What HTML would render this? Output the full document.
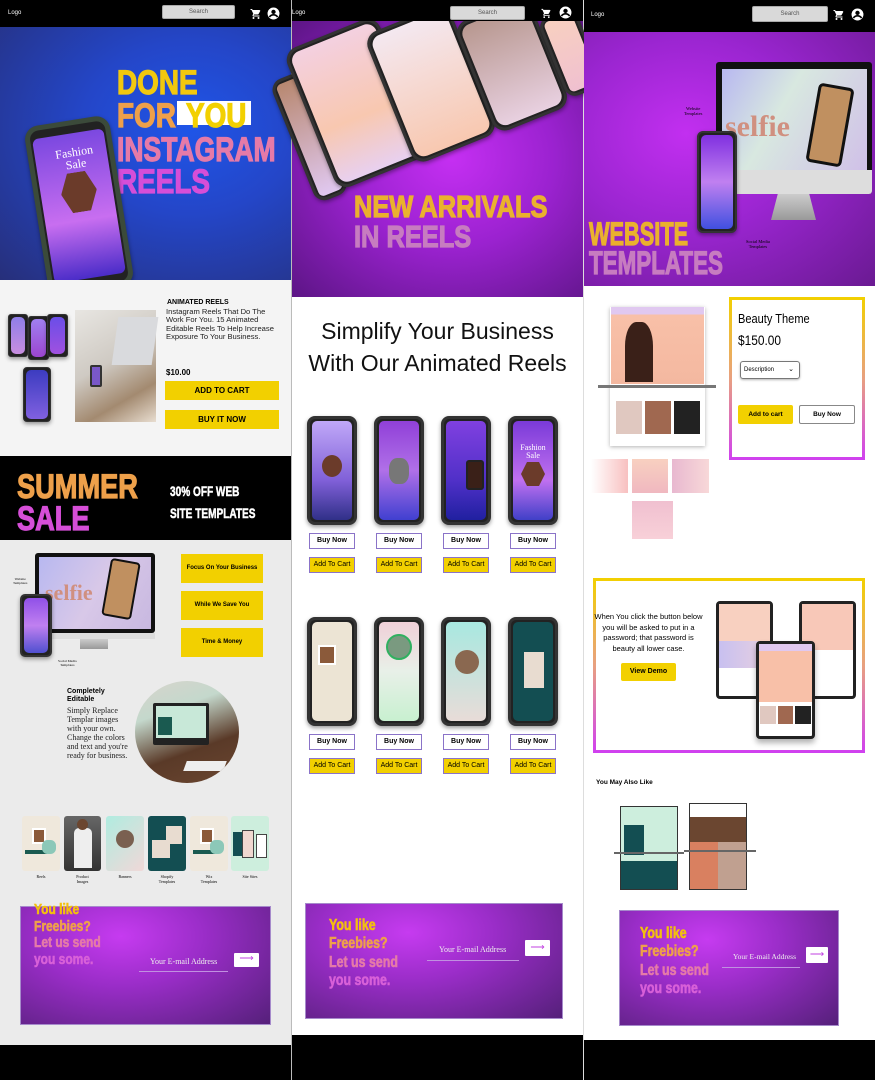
<!DOCTYPE html>
<html><head><meta charset="utf-8"><style>
*{margin:0;padding:0;box-sizing:border-box}
body{width:875px;height:1080px;position:relative;overflow:hidden;background:#fff;font-family:"Liberation Sans",sans-serif}
.a{position:absolute}
.hd{background:#000}
.logo{color:#fff;font-size:6px}
.srch{background:#d9d9d9;border:1px solid #aaa;border-radius:2px;color:#555;font-size:6px;text-align:center}
.big{font-family:"Liberation Sans",sans-serif;font-weight:900;line-height:1;transform-origin:left top;white-space:nowrap;-webkit-text-stroke:1.2px currentColor}
.sx{transform-origin:left top;white-space:nowrap}
.ph{border:3px solid #333;border-radius:8px;background:#222;box-shadow:0 2px 4px rgba(0,0,0,.4);overflow:hidden}
.ph i{position:absolute;left:2px;right:2px;top:2px;bottom:2px;border-radius:5px}
.yb{background:#f2d000;font-weight:900;color:#000;text-align:center}
.bn{border:1px solid #8a73c8;background:#fff;font-size:7px;font-weight:900;text-align:center;line-height:14px;width:46px;height:16px}
.ac{border:1px solid #8a73c8;background:#f2d000;font-size:7px;text-align:center;line-height:14px;width:46px;height:16px}
.fr{background:radial-gradient(ellipse at 40% 25%,#c63bf0 0%,#9a2dc8 40%,#55207a 100%);border:1px solid #a68acb}
.frt{font-weight:900;font-family:"Liberation Sans",sans-serif;transform:scaleX(.8);transform-origin:left top;white-space:nowrap;-webkit-text-stroke:.6px currentColor}
.frt span{-webkit-text-stroke:.6px}
.em{color:#eee;font-family:"Liberation Serif",serif;font-size:8px}
.arr{background:#fff;color:#c040e0;text-align:center;font-size:10px;line-height:12px;border-radius:1px}
</style></head><body>

<div class="a" style="left:291px;top:0;width:1px;height:1080px;background:#bbb"></div>
<div class="a" style="left:583px;top:0;width:1px;height:1080px;background:#ddd"></div>

<!-- ============ COL 1 ============ -->
<div class="a hd" style="left:0;top:0;width:291px;height:27px"></div>
<div class="a logo" style="left:8px;top:10px">Logo</div>
<div class="a srch" style="left:162px;top:5px;width:73px;height:14px;line-height:12px">Search</div>
<svg class="a" style="left:250px;top:8px" width="12" height="12" viewBox="0 0 24 24"><path fill="#fff" d="M7 18a2 2 0 1 0 0 4 2 2 0 0 0 0-4zM1 2v2h2l3.6 7.6-1.4 2.4c-.1.3-.2.6-.2 1 0 1.1.9 2 2 2h12v-2H7.4c-.1 0-.2-.1-.2-.2v-.1l.9-1.7h7.4c.8 0 1.4-.4 1.7-1l3.6-6.5L19.1 4H5.2l-.9-2H1zm16 16a2 2 0 1 0 0 4 2 2 0 0 0 0-4z"/></svg>
<svg class="a" style="left:267px;top:7px" width="13" height="13" viewBox="0 0 24 24"><circle cx="12" cy="12" r="11" fill="#fff"/><circle cx="12" cy="9" r="4" fill="#000"/><path d="M4.5 18.5c2-3 4.5-4 7.5-4s5.5 1 7.5 4" stroke="#000" stroke-width="3" fill="none"/></svg>

<div class="a" style="left:0;top:27px;width:291px;height:253px;background:radial-gradient(ellipse at 65% 40%,#1f55e8 0%,#2446c8 40%,#262f7a 100%)"></div>
<div class="a big" style="left:117px;top:66px;font-size:34px;color:#f2c80e;transform:scaleX(.82)">DONE</div>
<div class="a big" style="left:117px;top:99px;font-size:34px;color:#eea04a;transform:scaleX(.82)">FOR</div>
<div class="a" style="left:177px;top:101px;width:74px;height:24px;background:#fff"></div>
<div class="a big" style="left:186px;top:99px;font-size:34px;color:#f2d000;transform:scaleX(.82)">YOU</div>
<div class="a big" style="left:117px;top:133px;font-size:34px;color:#e57aa8;transform:scaleX(.78)">INSTAGRAM</div>
<div class="a big" style="left:117px;top:165px;font-size:34px;color:#d64ed8;transform:scaleX(.82)">REELS</div>
<div class="a ph" style="left:36px;top:120px;width:86px;height:172px;transform:rotate(-9deg);border-color:#3b4a3a;border-width:5px;border-radius:14px"><i style="background:linear-gradient(180deg,#7b48e0,#c86ef0 60%,#4a2cc8);border-radius:6px;top:8px;bottom:8px"></i></div>
<div class="a" style="left:56px;top:146px;color:#fff;font-family:'Liberation Serif',serif;font-size:12px;transform:rotate(-9deg);text-align:center;line-height:1">Fashion<br>Sale</div>
<div class="a" style="left:61px;top:172px;width:36px;height:40px;background:#6b3b2a;clip-path:polygon(25% 0,75% 0,100% 50%,75% 100%,25% 100%,0 50%);transform:rotate(-9deg)"></div>

<div class="a" style="left:0;top:280px;width:291px;height:176px;background:#f4f4f4"></div>
<div class="a" style="left:167px;top:299px;font-size:7px;font-weight:900">ANIMATED REELS</div>
<div class="a" style="left:166px;top:308px;width:118px;font-size:7.6px;line-height:8.4px;color:#222">Instagram Reels That Do The Work For You. 15 Animated Editable Reels To Help Increase Exposure To Your Business.</div>
<div class="a" style="left:166px;top:368px;font-size:8px;font-weight:bold">$10.00</div>
<div class="a yb" style="left:165px;top:381px;width:114px;height:19px;line-height:19px;font-size:8px">ADD TO CART</div>
<div class="a yb" style="left:165px;top:410px;width:114px;height:19px;line-height:19px;font-size:8px">BUY IT NOW</div>
<div class="a ph" style="left:8px;top:314px;width:20px;height:43px;border-width:1px;border-radius:3px"><i style="background:linear-gradient(#8f7ee8,#c88ee0)"></i></div>
<div class="a ph" style="left:28px;top:316px;width:21px;height:44px;border-width:1px;border-radius:3px"><i style="background:linear-gradient(#a080f0,#9b45d0)"></i></div>
<div class="a ph" style="left:47px;top:314px;width:21px;height:43px;border-width:1px;border-radius:3px"><i style="background:linear-gradient(#6a4ee8,#a050e0)"></i></div>
<div class="a ph" style="left:23px;top:367px;width:28px;height:55px;border-width:1px;border-radius:4px"><i style="background:linear-gradient(#3c3cc0,#8060e0)"></i></div>
<div class="a" style="left:75px;top:310px;width:81px;height:112px;background:linear-gradient(150deg,#e8e6e2 0%,#cfcac3 45%,#a38a70 75%,#e8ddd0 100%)"></div>
<div class="a" style="left:115px;top:317px;width:40px;height:48px;background:#d9dadd;transform:skewX(-8deg)"></div>
<div class="a" style="left:90px;top:365px;width:12px;height:22px;background:#7a58c8;border:2px solid #333;border-radius:2px"></div>

<div class="a" style="left:0;top:456px;width:291px;height:84px;background:#000"></div>
<div class="a big" style="left:17px;top:470px;font-size:34px;color:#eea04a;transform:scaleX(.8)">SUMMER</div>
<div class="a big" style="left:17px;top:502px;font-size:34px;color:#d64ed8;transform:scaleX(.8)">SALE</div>
<div class="a sx" style="left:170px;top:483px;color:#fff;font-weight:bold;font-size:14px;transform:scaleX(.72);-webkit-text-stroke:.5px #fff">30% OFF WEB</div>
<div class="a sx" style="left:170px;top:505px;color:#fff;font-weight:bold;font-size:14px;transform:scaleX(.72);-webkit-text-stroke:.5px #fff">SITE TEMPLATES</div>

<div class="a" style="left:0;top:540px;width:291px;height:505px;background:#ebebeb"></div>
<div class="a" style="left:35px;top:553px;width:120px;height:80px;background:#111;border-radius:3px"></div>
<div class="a" style="left:39px;top:557px;width:112px;height:72px;background:linear-gradient(120deg,#b8b8f0,#d8c8e8 50%,#c8b8e0)"></div>
<div class="a" style="left:45px;top:580px;font-family:'Liberation Serif',serif;font-size:22px;color:#d09080;font-weight:bold">selfie</div>
<div class="a" style="left:106px;top:560px;width:30px;height:58px;background:#c09060;border:2px solid #111;border-radius:4px;transform:rotate(10deg)"></div>
<div class="a" style="left:35px;top:633px;width:120px;height:6px;background:#ddd"></div>
<div class="a" style="left:80px;top:639px;width:28px;height:10px;background:linear-gradient(#ccc,#999)"></div>
<div class="a ph" style="left:20px;top:594px;width:32px;height:63px;border-width:2px;border-radius:5px"><i style="background:linear-gradient(#9050e8,#c080f0 50%,#5050d0)"></i></div>
<div class="a" style="left:13px;top:577px;font-size:3.5px;font-family:'Liberation Serif',serif;text-align:center">Website<br>Templates</div>
<div class="a" style="left:58px;top:659px;font-size:3.5px;font-family:'Liberation Serif',serif;text-align:center">Social Media<br>Templates</div>
<div class="a yb" style="left:181px;top:554px;width:82px;height:29px;line-height:29px;font-size:6px">Focus On Your Business</div>
<div class="a yb" style="left:181px;top:591px;width:82px;height:29px;line-height:29px;font-size:6px">While We Save You</div>
<div class="a yb" style="left:181px;top:628px;width:82px;height:29px;line-height:29px;font-size:6px">Time &amp; Money</div>
<div class="a" style="left:67px;top:688px;font-size:7px;font-weight:900;line-height:8px">Completely<br>Editable</div>
<div class="a" style="left:67px;top:706px;width:62px;font-size:8px;line-height:9px;font-family:'Liberation Serif',serif;color:#222">Simply Replace Templar images with your own. Change the colors and text and you're ready for business.</div>
<div class="a" style="left:135px;top:681px;width:104px;height:102px;border-radius:50%;background:linear-gradient(160deg,#d8d4cc 0%,#c4d8cc 30%,#5a3a28 65%,#6b4630 100%);overflow:hidden"><div class="a" style="left:18px;top:22px;width:56px;height:42px;background:#222;border-radius:2px"></div><div class="a" style="left:21px;top:25px;width:50px;height:32px;background:#c8e8d8"></div><div class="a" style="left:23px;top:36px;width:14px;height:18px;background:#1a5a50"></div><div class="a" style="left:50px;top:80px;width:40px;height:10px;background:#eee;transform:skewX(-20deg)"></div></div>
<div class="a" style="left:22px;top:816px;width:38px;height:55px;background:#efe8dc;border-radius:3px"><div class="a" style="left:10px;top:12px;width:14px;height:16px;background:#8b5a3a;border:2px solid #fff"></div><div class="a" style="left:3px;top:34px;width:22px;height:4px;background:#1a5a50"></div><div class="a" style="left:20px;top:24px;width:14px;height:14px;background:#8cc8b8;border-radius:40%"></div></div>
<div class="a" style="left:64px;top:816px;width:37px;height:55px;background:linear-gradient(#666,#333);border-radius:3px"><div class="a" style="left:10px;top:12px;width:18px;height:40px;background:#eee;border-radius:5px 5px 0 0"></div><div class="a" style="left:13px;top:3px;width:11px;height:11px;background:#6b4630;border-radius:50%"></div></div>
<div class="a" style="left:106px;top:816px;width:38px;height:55px;background:linear-gradient(135deg,#b0ece0,#f0d8d8);border-radius:3px"><div class="a" style="left:10px;top:14px;width:18px;height:18px;background:#7a6050;border-radius:50%"></div></div>
<div class="a" style="left:148px;top:816px;width:38px;height:55px;background:#134e52;border-radius:3px"><div class="a" style="left:18px;top:10px;width:16px;height:18px;background:#e8dcd0"></div><div class="a" style="left:4px;top:24px;width:18px;height:18px;background:#e8dcd0"></div></div>
<div class="a" style="left:190px;top:816px;width:38px;height:55px;background:#efe8dc;border-radius:3px"><div class="a" style="left:10px;top:12px;width:14px;height:16px;background:#8b5a3a;border:2px solid #fff"></div><div class="a" style="left:3px;top:34px;width:22px;height:4px;background:#1a5a50"></div><div class="a" style="left:20px;top:24px;width:14px;height:14px;background:#8cc8b8;border-radius:40%"></div></div>
<div class="a" style="left:231px;top:816px;width:38px;height:55px;background:#cdeedd;border-radius:3px"><div class="a" style="left:2px;top:16px;width:10px;height:24px;background:#134e52"></div><div class="a" style="left:11px;top:14px;width:12px;height:28px;background:#f0d8d0;border:1px solid #444"></div><div class="a" style="left:25px;top:18px;width:11px;height:24px;background:#fff;border:1px solid #444"></div></div>
<div class="a" style="left:22px;top:874px;width:38px;font-size:4px;font-family:'Liberation Serif',serif;text-align:center">Reels</div>
<div class="a" style="left:64px;top:874px;width:37px;font-size:4px;font-family:'Liberation Serif',serif;text-align:center">Product<br>Images</div>
<div class="a" style="left:106px;top:874px;width:38px;font-size:4px;font-family:'Liberation Serif',serif;text-align:center">Banners</div>
<div class="a" style="left:148px;top:874px;width:38px;font-size:4px;font-family:'Liberation Serif',serif;text-align:center">Shopify<br>Templates</div>
<div class="a" style="left:190px;top:874px;width:38px;font-size:4px;font-family:'Liberation Serif',serif;text-align:center">Wix<br>Templates</div>
<div class="a" style="left:231px;top:874px;width:38px;font-size:4px;font-family:'Liberation Serif',serif;text-align:center">Site Sites</div>

<div class="a fr" style="left:20px;top:906px;width:251px;height:119px"></div>
<div class="a frt" style="left:34px;top:902px;font-size:15px;line-height:16.5px"><span style="color:#f2c00e">You like</span><br><span style="color:#eea04a">Freebies?</span><br><span style="color:#e57aa8">Let us send</span><br><span style="color:#d860d8">you some.</span></div>
<div class="a em" style="left:150px;top:957px">Your E-mail Address</div>
<div class="a" style="left:139px;top:971px;width:89px;height:1px;background:#c090e0"></div>
<div class="a arr" style="left:234px;top:953px;width:25px;height:14px">⟶</div>
<div class="a" style="left:0;top:1045px;width:291px;height:35px;background:#000"></div>

<!-- ============ COL 2 ============ -->
<div class="a" style="left:292px;top:21px;width:291px;height:276px;background:radial-gradient(ellipse at 55% 50%,#c52ff2 0%,#9b22d0 45%,#5c1585 100%)"></div>
<div class="a ph" style="left:292px;top:72px;width:35px;height:130px;transform:rotate(-22deg);border-radius:12px"><i style="background:linear-gradient(#b88870,#e0c8f0)"></i></div>
<div class="a ph" style="left:307px;top:28px;width:100px;height:150px;transform:rotate(-22deg);border-radius:14px"><i style="background:linear-gradient(#f4d0e0,#f8c8b0 60%,#e8d0f0);border-radius:10px"></i></div>
<div class="a ph" style="left:386px;top:14px;width:90px;height:140px;transform:rotate(-22deg);border-radius:14px"><i style="background:linear-gradient(#f4e8f0,#f8c8b0);border-radius:10px"></i></div>
<div class="a ph" style="left:472px;top:6px;width:80px;height:118px;transform:rotate(-22deg);border-radius:14px"><i style="background:linear-gradient(#b89890,#e8d0e0);border-radius:10px"></i></div>
<div class="a ph" style="left:551px;top:10px;width:40px;height:85px;transform:rotate(-22deg);border-radius:12px"><i style="background:linear-gradient(#f8d0c0,#f0c0d0)"></i></div>
<div class="a hd" style="left:292px;top:0;width:291px;height:21px"></div>
<div class="a logo" style="left:292px;top:10px">Logo</div>
<div class="a srch" style="left:450px;top:6px;width:75px;height:14px;line-height:12px">Search</div>
<svg class="a" style="left:541px;top:8px" width="11" height="11" viewBox="0 0 24 24"><path fill="#fff" d="M7 18a2 2 0 1 0 0 4 2 2 0 0 0 0-4zM1 2v2h2l3.6 7.6-1.4 2.4c-.1.3-.2.6-.2 1 0 1.1.9 2 2 2h12v-2H7.4c-.1 0-.2-.1-.2-.2v-.1l.9-1.7h7.4c.8 0 1.4-.4 1.7-1l3.6-6.5L19.1 4H5.2l-.9-2H1zm16 16a2 2 0 1 0 0 4 2 2 0 0 0 0-4z"/></svg>
<svg class="a" style="left:559px;top:6px" width="13" height="13" viewBox="0 0 24 24"><circle cx="12" cy="12" r="11" fill="#fff"/><circle cx="12" cy="9" r="4" fill="#000"/><path d="M4.5 18.5c2-3 4.5-4 7.5-4s5.5 1 7.5 4" stroke="#000" stroke-width="3" fill="none"/></svg>
<div class="a big" style="left:354px;top:191px;font-size:31px;color:#eab12e;transform:scaleX(.82)">NEW ARRIVALS</div>
<div class="a big" style="left:354px;top:221px;font-size:31px;color:#c77cc0;transform:scaleX(.82)">IN REELS</div>

<div class="a" style="left:292px;top:315px;width:291px;text-align:center;font-size:23px;line-height:32px;color:#111">Simplify Your Business<br>With Our Animated Reels</div>

<div class="a ph" style="left:307px;top:416px;width:50px;height:109px"><i style="background:linear-gradient(#c0a8f8,#8060d8 60%,#303088)"></i></div>
<div class="a ph" style="left:374px;top:416px;width:50px;height:109px"><i style="background:linear-gradient(#9040d8,#b070e8 50%,#4040d0)"></i></div>
<div class="a ph" style="left:441px;top:416px;width:50px;height:109px"><i style="background:linear-gradient(#8040e0,#5030c8 60%,#2020a0)"></i></div>
<div class="a ph" style="left:508px;top:416px;width:50px;height:109px"><i style="background:linear-gradient(#7a3ad8,#c070f0 60%,#4040c8)"></i></div>
<div class="a ph" style="left:307px;top:617px;width:50px;height:109px"><i style="background:#ece4d4"></i></div>
<div class="a ph" style="left:374px;top:617px;width:50px;height:109px"><i style="background:linear-gradient(#f0d0d8,#e8f0e8 50%,#c8f0d0)"></i></div>
<div class="a ph" style="left:441px;top:617px;width:50px;height:109px"><i style="background:linear-gradient(#a8e8e0,#e8dcd8)"></i></div>
<div class="a ph" style="left:508px;top:617px;width:50px;height:109px"><i style="background:#134e52"></i></div>
<div class="a" style="left:322px;top:455px;width:20px;height:22px;background:#6b3b2a;border-radius:50%"></div>
<div class="a" style="left:389px;top:458px;width:20px;height:26px;background:#777;border-radius:40%"></div>
<div class="a" style="left:466px;top:460px;width:18px;height:30px;background:#3a2018;border:2px solid #222;border-radius:3px"></div>
<div class="a" style="left:521px;top:462px;width:24px;height:24px;background:#6b3b2a;clip-path:polygon(25% 0,75% 0,100% 50%,75% 100%,25% 100%,0 50%)"></div>
<div class="a" style="left:516px;top:444px;color:#fff;font-family:'Liberation Serif',serif;font-size:8px;line-height:8px;text-align:center;width:34px">Fashion<br>Sale</div>
<div class="a" style="left:318px;top:645px;width:18px;height:20px;background:#8b5a3a;border:2px solid #fff"></div>
<div class="a" style="left:386px;top:634px;width:26px;height:26px;background:#7a9a80;border-radius:50%;border:2px solid #30b060"></div>
<div class="a" style="left:455px;top:650px;width:24px;height:24px;background:#8a6850;border-radius:50%"></div>
<div class="a" style="left:524px;top:652px;width:20px;height:36px;background:#e8dcd0"></div>

<div class="a bn" style="left:309px;top:533px">Buy Now</div><div class="a bn" style="left:376px;top:533px">Buy Now</div><div class="a bn" style="left:443px;top:533px">Buy Now</div><div class="a bn" style="left:510px;top:533px">Buy Now</div>
<div class="a ac" style="left:309px;top:557px">Add To Cart</div><div class="a ac" style="left:376px;top:557px">Add To Cart</div><div class="a ac" style="left:443px;top:557px">Add To Cart</div><div class="a ac" style="left:510px;top:557px">Add To Cart</div>
<div class="a bn" style="left:309px;top:734px">Buy Now</div><div class="a bn" style="left:376px;top:734px">Buy Now</div><div class="a bn" style="left:443px;top:734px">Buy Now</div><div class="a bn" style="left:510px;top:734px">Buy Now</div>
<div class="a ac" style="left:309px;top:758px">Add To Cart</div><div class="a ac" style="left:376px;top:758px">Add To Cart</div><div class="a ac" style="left:443px;top:758px">Add To Cart</div><div class="a ac" style="left:510px;top:758px">Add To Cart</div>

<div class="a fr" style="left:305px;top:903px;width:258px;height:116px"></div>
<div class="a frt" style="left:329px;top:917px;font-size:15.5px;line-height:18.3px"><span style="color:#f2c00e">You like</span><br><span style="color:#eea04a">Freebies?</span><br><span style="color:#e57aa8">Let us send</span><br><span style="color:#d860d8">you some.</span></div>
<div class="a em" style="left:439px;top:945px">Your E-mail Address</div>
<div class="a" style="left:427px;top:960px;width:92px;height:1px;background:#c090e0"></div>
<div class="a arr" style="left:525px;top:940px;width:25px;height:16px;line-height:15px">⟶</div>
<div class="a" style="left:292px;top:1035px;width:291px;height:45px;background:#000"></div>

<!-- ============ COL 3 ============ -->
<div class="a hd" style="left:584px;top:0;width:291px;height:32px"></div>
<div class="a logo" style="left:591px;top:12px">Logo</div>
<div class="a srch" style="left:752px;top:6px;width:76px;height:16px;line-height:14px">Search</div>
<svg class="a" style="left:833px;top:9px" width="12" height="12" viewBox="0 0 24 24"><path fill="#fff" d="M7 18a2 2 0 1 0 0 4 2 2 0 0 0 0-4zM1 2v2h2l3.6 7.6-1.4 2.4c-.1.3-.2.6-.2 1 0 1.1.9 2 2 2h12v-2H7.4c-.1 0-.2-.1-.2-.2v-.1l.9-1.7h7.4c.8 0 1.4-.4 1.7-1l3.6-6.5L19.1 4H5.2l-.9-2H1zm16 16a2 2 0 1 0 0 4 2 2 0 0 0 0-4z"/></svg>
<svg class="a" style="left:851px;top:8px" width="13" height="13" viewBox="0 0 24 24"><circle cx="12" cy="12" r="11" fill="#fff"/><circle cx="12" cy="9" r="4" fill="#000"/><path d="M4.5 18.5c2-3 4.5-4 7.5-4s5.5 1 7.5 4" stroke="#000" stroke-width="3" fill="none"/></svg>
<div class="a" style="left:584px;top:32px;width:291px;height:254px;background:radial-gradient(ellipse at 35% 40%,#c22ff0 0%,#9a25d0 45%,#6a1a92 100%)"></div>
<div class="a" style="left:716px;top:62px;width:156px;height:132px;background:#111;border-radius:3px"></div>
<div class="a" style="left:722px;top:69px;width:145px;height:101px;background:linear-gradient(120deg,#b8b8f0,#d8e8e0 40%,#d0c0e8)"></div>
<div class="a" style="left:725px;top:110px;font-family:'Liberation Serif',serif;font-size:30px;color:#d09080;font-weight:bold">selfie</div>
<div class="a" style="left:812px;top:85px;width:36px;height:80px;background:#c09060;border:3px solid #111;border-radius:5px;transform:rotate(10deg)"></div>
<div class="a" style="left:716px;top:170px;width:156px;height:24px;background:#ddd;border-radius:0 0 3px 3px"></div>
<div class="a" style="left:771px;top:194px;width:45px;height:26px;background:linear-gradient(#ccc,#999);clip-path:polygon(15% 0,85% 0,100% 100%,0 100%)"></div>
<div class="a ph" style="left:697px;top:131px;width:40px;height:102px;border-width:2px;border-radius:6px"><i style="background:linear-gradient(#8030e0,#c080f0 50%,#4050e0)"></i></div>
<div class="a" style="left:684px;top:106px;font-size:4.5px;font-family:'Liberation Serif',serif;text-align:center">Website<br>Templates</div>
<div class="a" style="left:746px;top:239px;font-size:4.5px;font-family:'Liberation Serif',serif;text-align:center">Social Media<br>Templates</div>
<div class="a big" style="left:589px;top:218px;font-size:32px;color:#eab12e;transform:scaleX(.68)">WEBSITE</div>
<div class="a big" style="left:589px;top:247px;font-size:32px;color:#c77cc0;transform:scaleX(.7)">TEMPLATES</div>

<div class="a" style="left:610px;top:307px;width:95px;height:139px;background:#fff;box-shadow:0 1px 4px rgba(0,0,0,.3)"></div>
<div class="a" style="left:611px;top:307px;width:93px;height:77px;background:linear-gradient(#e0c8f0 0,#e0c8f0 10%,#f8c0a8 10%,#f4b8a0)"></div>
<div class="a" style="left:625px;top:322px;width:28px;height:60px;background:#3a2018;border-radius:40% 40% 0 0"></div>
<div class="a" style="left:598px;top:385px;width:118px;height:3px;background:#777"></div>
<div class="a" style="left:616px;top:401px;width:26px;height:33px;background:#e0c8c0"></div>
<div class="a" style="left:645px;top:401px;width:26px;height:33px;background:#a06850"></div>
<div class="a" style="left:674px;top:401px;width:26px;height:33px;background:#222"></div>
<div class="a" style="left:591px;top:459px;width:37px;height:34px;background:linear-gradient(90deg,#fff,#f8c0c0)"></div>
<div class="a" style="left:632px;top:459px;width:36px;height:34px;background:linear-gradient(#f8d0c0,#f0b8c0)"></div>
<div class="a" style="left:672px;top:459px;width:37px;height:34px;background:linear-gradient(90deg,#e8b8d0,#f8d8d8)"></div>
<div class="a" style="left:632px;top:501px;width:41px;height:38px;background:linear-gradient(#f0c0d0,#f8d0d8)"></div>

<div class="a" style="left:729px;top:297px;width:136px;height:163px;padding:3px;background:linear-gradient(#f2d000,#e8a080 50%,#d040f0)"><div style="width:100%;height:100%;background:#fff"></div></div>
<div class="a sx" style="left:738px;top:311px;font-size:13px;transform:scaleX(.85)">Beauty Theme</div>
<div class="a sx" style="left:738px;top:332px;font-size:14px;transform:scaleX(.85)">$150.00</div>
<div class="a" style="left:740px;top:361px;width:60px;height:18px;border:1px solid #777;border-radius:3px;font-size:6px;line-height:16px;padding-left:3px;box-shadow:0 1px 2px rgba(0,0,0,.3)">Description<span style="position:absolute;right:5px;font-size:7px">⌄</span></div>
<div class="a yb" style="left:738px;top:405px;width:55px;height:19px;line-height:19px;font-size:6.5px;border-radius:2px">Add to cart</div>
<div class="a" style="left:799px;top:405px;width:56px;height:19px;line-height:17px;font-size:6.5px;border:1px solid #888;border-radius:2px;text-align:center;font-weight:900">Buy Now</div>

<div class="a" style="left:593px;top:578px;width:272px;height:175px;padding:3px;background:linear-gradient(#f2d000,#e8a080 50%,#d040f0)"><div style="width:100%;height:100%;background:#fff"></div></div>
<div class="a" style="left:593px;top:612px;width:111px;text-align:center;font-size:7.5px;line-height:10.7px">When You click the button below you will be asked to put in a password; that password is beauty all lower case.</div>
<div class="a yb" style="left:621px;top:663px;width:55px;height:18px;line-height:18px;font-size:7px;border-radius:2px">View Demo</div>
<div class="a" style="left:716px;top:601px;width:57px;height:98px;background:#fff;border:3px solid #222;border-radius:4px"><div style="height:40%;background:#f8d0c0"></div><div style="height:30%;background:linear-gradient(90deg,#c8c0f0,#e8d0e0)"></div></div>
<div class="a" style="left:799px;top:601px;width:57px;height:98px;background:#fff;border:3px solid #222;border-radius:4px"><div style="height:50%;background:#f8c8b8"></div></div>
<div class="a" style="left:756px;top:641px;width:59px;height:98px;background:#fff;border:3px solid #222;border-radius:4px;box-shadow:0 4px 6px rgba(0,0,0,.3)"><div style="height:8%;background:#e0c8f0"></div><div style="height:55%;background:#f8c0a8"></div><div style="display:flex;gap:2px;padding:4px 1px"><span style="flex:1;height:18px;background:#e0c8c0"></span><span style="flex:1;height:18px;background:#a06850"></span><span style="flex:1;height:18px;background:#222"></span></div></div>

<div class="a" style="left:596px;top:779px;font-size:6.5px;font-weight:900">You May Also Like</div>
<div class="a" style="left:620px;top:806px;width:58px;height:84px;background:#cdeedd;border:1px solid #333"><div class="a" style="left:3px;top:18px;width:20px;height:30px;background:#134e52"></div><div style="position:absolute;left:0;bottom:0;width:100%;height:28px;background:#134e52"></div></div>
<div class="a" style="left:614px;top:852px;width:70px;height:2px;background:#666"></div>
<div class="a" style="left:689px;top:803px;width:58px;height:87px;background:#fff;border:1px solid #333"><div style="height:15%;background:#fff"></div><div style="height:30%;background:#6b4630"></div><div style="height:55%;background:linear-gradient(90deg,#d98060 50%,#c0a090 50%)"></div></div>
<div class="a" style="left:684px;top:850px;width:72px;height:2px;background:#666"></div>

<div class="a fr" style="left:619px;top:910px;width:220px;height:116px"></div>
<div class="a frt" style="left:640px;top:925px;font-size:15.5px;line-height:18.3px"><span style="color:#f2c00e">You like</span><br><span style="color:#eea04a">Freebies?</span><br><span style="color:#e57aa8">Let us send</span><br><span style="color:#d860d8">you some.</span></div>
<div class="a em" style="left:733px;top:952px;font-size:7.5px">Your E-mail Address</div>
<div class="a" style="left:722px;top:967px;width:78px;height:1px;background:#c090e0"></div>
<div class="a arr" style="left:806px;top:947px;width:22px;height:16px;line-height:15px">⟶</div>
<div class="a" style="left:584px;top:1040px;width:291px;height:40px;background:#000"></div>
</body></html>
